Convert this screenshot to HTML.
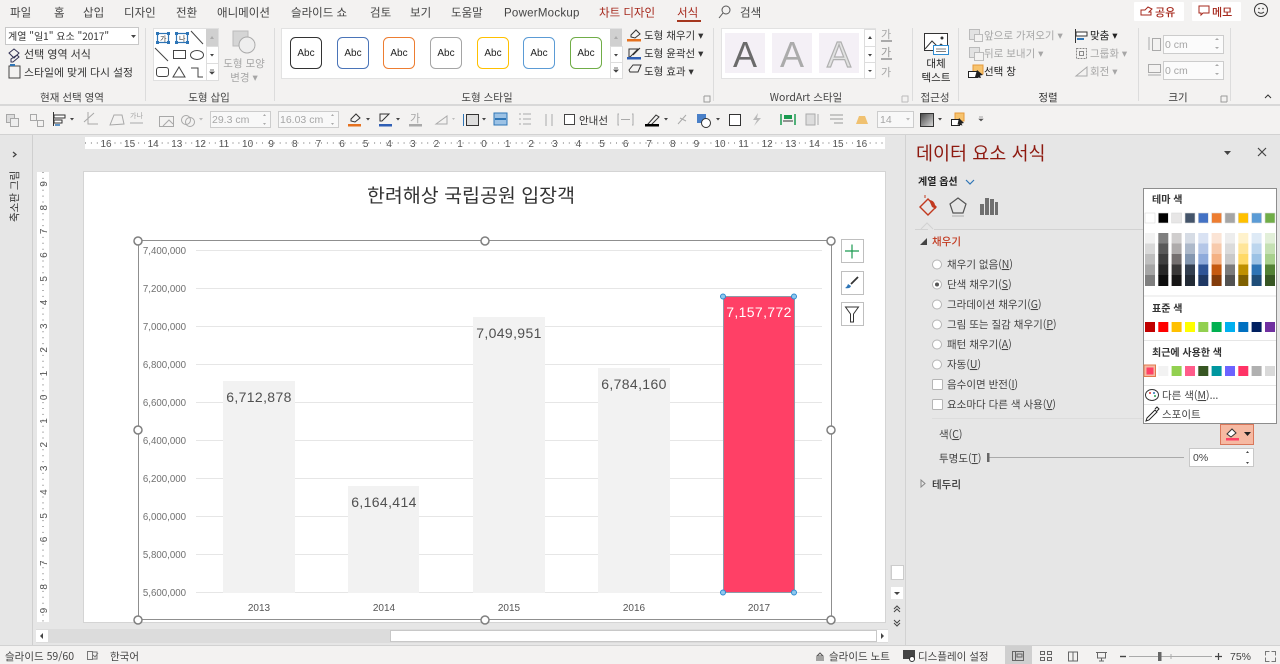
<!DOCTYPE html>
<html lang="ko"><head><meta charset="utf-8"><title>PowerPoint</title>
<style>
html,body{margin:0;padding:0;width:1280px;height:664px;overflow:hidden;background:#e6e6e6}
svg{display:block}
text{font-family:"Liberation Sans","Noto Sans CJK KR",sans-serif;font-size:11px;fill:#444}
.k{font-family:"Noto Sans CJK KR","Liberation Sans",sans-serif}
.t{font-size:11.5px;fill:#444}
.d{fill:#a6a6a6}
.r{font-size:10px;fill:#555}
.ax{font-size:9.7px;fill:#707070}
.v{font-size:14px;fill:#505050;text-anchor:middle;letter-spacing:.35px}
.g{stroke:#e6e6e6;stroke-width:1}
.h{fill:#fff;stroke:#7f7f7f;stroke-width:1.5}
.i{fill:none;stroke:#555;stroke-width:1}
.o{fill:none;stroke:#aaa;stroke-width:1}
.m{text-anchor:middle}
</style></head><body>
<svg xmlns="http://www.w3.org/2000/svg" width="1280" height="664" viewBox="0 0 1280 664">
<rect width="1280" height="664" fill="#e6e6e6"/>
<rect width="1280" height="135" fill="#f3f2f1"/>
<rect y="104" width="1280" height="2" fill="#d8d8d8"/>
<rect y="134" width="1280" height="1" fill="#d2d2d2"/>

<!-- tabs -->
<g class="k">
<text class="t" x="10" y="16.500">파일</text><text class="t" x="54" y="16.500">홈</text><text class="t" x="83" y="16.500">삽입</text><text class="t" x="124" y="16.500">디자인</text><text class="t" x="176" y="16.500">전환</text><text class="t" x="217" y="16.500">애니메이션</text><text class="t" x="291" y="16.500">슬라이드 쇼</text><text class="t" x="370" y="16.500">검토</text><text class="t" x="410" y="16.500">보기</text><text class="t" x="451" y="16.500">도움말</text>
<text class="t" x="504" y="16.500" style="letter-spacing:.25px">PowerMockup</text>
<text class="t" x="599" y="16.500" style="fill:#a5271b">차트 디자인</text>
<text class="t" x="677" y="16.500" style="fill:#a5271b">서식</text>
<text class="t" x="740" y="16.500">검색</text>
</g>
<rect x="677" y="20" width="24" height="2" fill="#a5371f"/>
<circle cx="726" cy="10" r="4" class="i"/><path d="M723 13l-4 5" class="i"/>
<rect x="1134" y="2" width="50" height="19" rx="1" fill="#fff"/>
<rect x="1192" y="2" width="49" height="19" rx="1" fill="#fff"/>
<path d="M1141 15v-5h4l3-3 4 2-3 3h2v3z" fill="none" stroke="#a5271b"/>
<path d="M1199 6h10v7h-6l-2 2v-2h-2z" fill="none" stroke="#a5271b"/>
<text class="k" x="1155" y="16" style="fill:#a5271b;font-weight:500;font-size:11px">공유</text>
<text class="k" x="1212" y="16" style="fill:#a5271b;font-weight:500;font-size:11px">메모</text>
<circle cx="1261" cy="10" r="6.5" class="i" style="stroke:#333"/><circle cx="1259" cy="8.5" r=".8" fill="#333"/><circle cx="1263" cy="8.5" r=".8" fill="#333"/><path d="M1258 12q3 2.500 6 0" class="i" style="stroke:#333"/>

<!-- group separators -->
<g fill="#dcdcdc"><rect x="145" y="28" width="1" height="73"/><rect x="274" y="28" width="1" height="73"/><rect x="713" y="28" width="1" height="73"/><rect x="912" y="28" width="1" height="73"/><rect x="958" y="28" width="1" height="73"/><rect x="1138" y="28" width="1" height="73"/><rect x="1230" y="28" width="1" height="73"/></g>

<!-- current selection -->
<rect x="5.500" y="27.500" width="133" height="17" fill="#fff" stroke="#c8c8c8"/>
<text class="k" x="8" y="40" style="font-size:10px;fill:#333">계열 "일1" 요소 "2017"</text>
<path d="M131 35h5l-2.500 3z" fill="#444"/>
<path d="M9 53l5-4 5 4-5 5zM11 59l6-4 2 2-6 5h-2z" fill="none" stroke="#335"/>
<rect x="9" y="66" width="11" height="12" fill="none" stroke="#444"/><path d="M10 65h5" stroke="#2e75b6" stroke-width="2"/>
<text class="k" x="24" y="58" style="font-size:11px;fill:#333">선택 영역 서식</text>
<text class="k" x="24" y="76" style="font-size:10.500px;fill:#333" textLength="109" lengthAdjust="spacingAndGlyphs">스타일에 맞게 다시 설정</text>
<text class="k m" x="72" y="101" style="font-size:10.500px">현재 선택 영역</text>

<!-- shape gallery -->
<rect x="153.500" y="28.500" width="65" height="52" fill="#fff" stroke="#e0e0e0"/>
<rect x="206" y="29" width="12" height="17" fill="#d0d0d0"/><rect x="206.500" y="46.500" width="12" height="17" fill="#fff" stroke="#ddd"/><rect x="206.500" y="63.500" width="12" height="17" fill="#fff" stroke="#ddd"/>
<path d="M210 39l2-3 2 3z" fill="#aaa"/><path d="M210 54h4l-2 2.500z" fill="#444"/><path d="M210 70h4M210 72h4l-2 2z" stroke="#444" fill="#444" stroke-width=".8"/>
<rect x="157.500" y="33.500" width="11" height="9" fill="none" stroke="#2e75b6" stroke-width="1.200"/><rect x="176.500" y="33.500" width="11" height="9" fill="none" stroke="#2e75b6" stroke-width="1.200"/>
<g fill="#2e75b6"><rect x="156" y="32" width="3" height="3"/><rect x="167" y="32" width="3" height="3"/><rect x="156" y="41" width="3" height="3"/><rect x="167" y="41" width="3" height="3"/><rect x="175" y="32" width="3" height="3"/><rect x="186" y="32" width="3" height="3"/><rect x="175" y="41" width="3" height="3"/><rect x="186" y="41" width="3" height="3"/></g>
<text class="k" x="160" y="41" style="font-size:7px;fill:#333">가</text><text class="k" x="179" y="41" style="font-size:7px;fill:#333">나</text>
<g fill="none" stroke="#444"><path d="M191 31l12 13M155 48l13 13"/><rect x="173.500" y="50.500" width="12" height="8"/><ellipse cx="197" cy="55" rx="6.500" ry="4.500"/><rect x="156.500" y="67.500" width="12" height="9" rx="2.500"/><path d="M173 77l6-10 6 10zM191 68h7v9h5"/></g>
<rect x="233" y="31" width="15" height="15" fill="#d5d5d5" stroke="#bbb"/><circle cx="247" cy="45" r="8" fill="#eee" stroke="#aaa"/>
<text class="k m d" x="244" y="67" style="font-size:10.500px">도형 모양</text><text class="k m d" x="244" y="81" style="font-size:10.500px">변경 ▾</text>
<text class="k m" x="209" y="101" style="font-size:10.500px">도형 삽입</text>

<!-- shape styles -->
<rect x="281.500" y="28.500" width="340" height="50" fill="#fff" stroke="#e2e2e2"/>
<g fill="#fff" stroke-width="1"><rect x="290.500" y="37.500" width="31" height="31" rx="5" stroke="#333"/><rect x="337.500" y="37.500" width="31" height="31" rx="5" stroke="#4a74b8"/><rect x="383.500" y="37.500" width="31" height="31" rx="5" stroke="#ed7d31"/><rect x="430.500" y="37.500" width="31" height="31" rx="5" stroke="#a5a5a5"/><rect x="477.500" y="37.500" width="31" height="31" rx="5" stroke="#ffc000"/><rect x="523.500" y="37.500" width="31" height="31" rx="5" stroke="#5b9bd5"/><rect x="570.500" y="37.500" width="31" height="31" rx="5" stroke="#70ad47"/></g>
<g style="font-size:10px"><text class="m" x="306" y="56" style="fill:#222;font-size:10px">Abc</text><text class="m" x="353" y="56" style="fill:#222;font-size:10px">Abc</text><text class="m" x="399" y="56" style="fill:#222;font-size:10px">Abc</text><text class="m" x="446" y="56" style="fill:#222;font-size:10px">Abc</text><text class="m" x="493" y="56" style="fill:#222;font-size:10px">Abc</text><text class="m" x="539" y="56" style="fill:#222;font-size:10px">Abc</text><text class="m" x="586" y="56" style="fill:#222;font-size:10px">Abc</text></g>
<rect x="610" y="29" width="12" height="17" fill="#d0d0d0"/><rect x="610.500" y="46.500" width="12" height="16" fill="#fff" stroke="#ddd"/><rect x="610.500" y="62.500" width="12" height="16" fill="#fff" stroke="#ddd"/>
<path d="M614 39l2-3 2 3z" fill="#aaa"/><path d="M614 54h4l-2 2.500z" fill="#444"/><path d="M614 68h4M614 70h4l-2 2z" stroke="#444" fill="#444" stroke-width=".8"/>
<path d="M631 35l5-5 4 4-5 4-4-1z" fill="none" stroke="#333"/><rect x="627" y="39" width="14" height="2.500" fill="#e5711f"/>
<path d="M629 49h9l-1 1-7 7h-1zM640 48l-7 7" fill="none" stroke="#333"/><rect x="627" y="57" width="14" height="2.500" fill="#2f5fb5"/>
<path d="M629 70l4-5h8l-3 7h-8z" fill="none" stroke="#333"/>
<g class="k" style="font-size:10.500px"><text x="644" y="39" style="font-size:10.500px;fill:#333">도형 채우기 ▾</text><text x="644" y="57" style="font-size:10.500px;fill:#333">도형 윤곽선 ▾</text><text x="644" y="75" style="font-size:10.500px;fill:#333">도형 효과 ▾</text></g>
<text class="k m" x="487" y="101" style="font-size:10.500px">도형 스타일</text>
<path d="M704 96h6v6M704 96v6h6" class="o" style="stroke:#999"/>

<!-- wordart -->
<rect x="721.500" y="28.500" width="154" height="50" fill="#fff" stroke="#e2e2e2"/>
<rect x="725" y="33" width="40" height="40" fill="#f4f0f6"/><rect x="772" y="33" width="40" height="40" fill="#f4f0f6"/><rect x="819" y="33" width="40" height="40" fill="#f4f0f6"/>
<text class="m" x="745" y="67" style="font-size:36px;fill:#6b6b6b">A</text><text class="m" x="792" y="67" style="font-size:36px;fill:#ababab">A</text><text class="m" x="839" y="67" style="font-size:36px;fill:#e2e2e2;stroke:#b0b0b0;stroke-width:1.200">A</text>
<rect x="864.500" y="29.500" width="11" height="17" fill="#fff" stroke="#ddd"/><rect x="864.500" y="46.500" width="11" height="16" fill="#fff" stroke="#ddd"/><rect x="864.500" y="62.500" width="11" height="16" fill="#fff" stroke="#ddd"/>
<path d="M868 39l2-3 2 3zM868 54h4l-2 2.500zM868 70h4l-2 2z" fill="#444"/>
<text class="k d" x="881" y="38" style="font-size:11px">가</text><rect x="881" y="40" width="11" height="2" fill="#aaa"/><text class="k d" x="881" y="56" style="font-size:11px;fill:#999">가</text><rect x="881" y="58" width="11" height="2" fill="#aaa"/><text class="k d" x="881" y="76" style="font-size:11px">가</text>
<text class="k m" x="806" y="101" style="font-size:10.500px">WordArt 스타일</text>
<path d="M902 96h6v6M902 96v6h6" class="o" style="stroke:#bbb"/>

<!-- alt text -->
<rect x="924.500" y="33.500" width="23" height="17" fill="#fff" stroke="#333"/><path d="M925 49l7-8 6 6 3-3 6 5" fill="none" stroke="#333"/><circle cx="942" cy="38" r="1.500" fill="#333"/>
<rect x="933.500" y="45.500" width="15" height="9" fill="#fff" stroke="#2e8bd0"/><path d="M936 49h10M936 51.500h10" stroke="#555" stroke-width=".8"/>
<text class="k m" x="936" y="67" style="font-size:10.500px;fill:#222">대체</text><text class="k m" x="936" y="81" style="font-size:10.500px;fill:#222">텍스트</text>
<text class="k m" x="935" y="101" style="font-size:10.500px">접근성</text>

<!-- arrange -->
<g fill="#e2e2e2" stroke="#bbb"><rect x="969.500" y="29.500" width="10" height="10"/><rect x="974.500" y="34.500" width="8" height="7" fill="#f3f2f1"/><rect x="969.500" y="47.500" width="10" height="10"/><rect x="974.500" y="52.500" width="9" height="8" fill="#f3f2f1"/></g>
<rect x="973" y="65" width="10" height="9" fill="#f7c36d" stroke="#e59a3a"/><rect x="968.500" y="71.500" width="9" height="6" fill="#fff" stroke="#222"/><path d="M977 70l6 5-3 .5 1 2.500-6-1z" fill="#222"/>
<text class="k d" x="984" y="39" style="font-size:10.500px">앞으로 가져오기 ▾</text><text class="k d" x="984" y="57" style="font-size:10.500px">뒤로 보내기 ▾</text><text class="k" x="984" y="75" style="font-size:10.500px;fill:#222">선택 창</text>
<path d="M1075.500 29v14" stroke="#333"/><rect x="1076" y="32" width="11" height="4" fill="#fff" stroke="#333"/><path d="M1077 39h7" stroke="#2e75b6" stroke-width="2"/>
<rect x="1076.500" y="48.500" width="10" height="10" fill="none" stroke="#888" stroke-dasharray="2 1"/><rect x="1079.500" y="51.500" width="4" height="4" fill="none" stroke="#888"/>
<path d="M1076 76l11-9v9z" fill="none" stroke="#aaa"/>
<text class="k" x="1090" y="39" style="font-size:10.500px;fill:#222">맞춤 ▾</text><text class="k d" x="1090" y="57" style="font-size:10.500px">그룹화 ▾</text><text class="k d" x="1090" y="75" style="font-size:10.500px">회전 ▾</text>
<text class="k m" x="1048" y="101" style="font-size:10.500px;fill:#333">정렬</text>

<!-- size -->
<rect x="1163.500" y="35.500" width="60" height="18" fill="#fbfbfb" stroke="#ccc"/><rect x="1163.500" y="61.500" width="60" height="18" fill="#fbfbfb" stroke="#ccc"/>
<text class="d" x="1165" y="48" style="font-size:10.500px">0 cm</text><text class="d" x="1165" y="74" style="font-size:10.500px">0 cm</text>
<path d="M1215 40l2-2 2 2zM1215 47h4l-2 2zM1215 66l2-2 2 2zM1215 73h4l-2 2z" fill="#aaa"/>
<rect x="1152.500" y="38.500" width="8" height="12" fill="none" stroke="#aaa"/><path d="M1149 37v13" stroke="#aaa"/>
<rect x="1148.500" y="64.500" width="12" height="8" fill="none" stroke="#aaa"/><path d="M1148 75h13" stroke="#aaa"/>
<text class="k m" x="1178" y="101" style="font-size:10.500px;fill:#333">크기</text>
<path d="M1221 96h6v6M1221 96v6h6" class="o" style="stroke:#999"/>
<path d="M1265 98l3-3 3 3" fill="none" stroke="#333"/>

<!-- toolbar -->
<g fill="none" stroke="#a8a8a8"><rect x="6.500" y="114.500" width="8" height="8" fill="#ddd"/><rect x="10.500" y="118.500" width="8" height="8" fill="#eee"/><rect x="30.500" y="114.500" width="6" height="6"/><rect x="37.500" y="120.500" width="6" height="6"/><path d="M84 122l10-9M88 112v12h10M110 125l4-10h8l2 9z"/><rect x="159.500" y="116.500" width="14" height="10"/><path d="M163 126l6-6 4 4"/><circle cx="186" cy="120" r="4.500"/><circle cx="190" cy="122" r="4.500"/><path d="M199 118h4l-2 2.500z" fill="#bbb" stroke="none"/></g>
<path d="M53.500 112v14" stroke="#333"/><rect x="54" y="115" width="11" height="3" fill="#fff" stroke="#333"/><rect x="54" y="120" width="8" height="3" fill="#fff" stroke="#333"/><path d="M55 125h5" stroke="#2e75b6" stroke-width="1.500"/><path d="M70 118h4l-2 2.500z" fill="#444"/>
<text class="k d" x="130" y="118" style="font-size:7px">가나</text><path d="M130 123h13" stroke="#aaa"/>
<rect x="210.500" y="111.500" width="60" height="16" fill="#f8f8f8" stroke="#ccc"/><rect x="278.500" y="111.500" width="60" height="16" fill="#f8f8f8" stroke="#ccc"/>
<text class="d" x="212" y="123" style="font-size:10.500px">29.3 cm</text><text class="d" x="280" y="123" style="font-size:10.500px">16.03 cm</text>
<path d="M263 116l1.500-2 1.500 2zM263 123h3l-1.500 2zM331 116l1.500-2 1.500 2zM331 123h3l-1.500 2z" fill="#aaa"/>
<path d="M351 119l5-5 4 4-5 4-4-1z" fill="none" stroke="#333"/><rect x="348" y="124" width="13" height="2.500" fill="#e5711f"/><path d="M366 118h4l-2 2.500z" fill="#444"/>
<path d="M380 114h9l-7 7h-2v-7z" fill="none" stroke="#333"/><rect x="379" y="124" width="13" height="2.500" fill="#2f5fb5"/><path d="M396 118h4l-2 2.500z" fill="#444"/>
<text class="k d" x="410" y="122" style="font-size:11px">가</text><rect x="409" y="124" width="13" height="2.500" fill="#aaa"/>
<path d="M436 124l11-8v8z" fill="none" stroke="#aaa"/><path d="M452 118h3l-1.500 2z" fill="#bbb"/>
<path d="M463.500 114v12" stroke="#2e75b6"/><rect x="466.500" y="114.500" width="12" height="11" fill="#ddd" stroke="#333"/><path d="M482 118h4l-2 2.500z" fill="#444"/>
<rect x="494" y="113" width="13" height="12" fill="#9cc2e5" stroke="#2e75b6"/><path d="M495 119h11" stroke="#2e75b6" stroke-width="2"/>
<path d="M519 114h2M519 119h2M519 124h2M523 114h8M523 119h8M523 124h8M546 114v12M552 114v12" stroke="#aaa"/>
<rect x="564.500" y="114.500" width="10" height="10" fill="#fff" stroke="#444"/><text class="k" x="579" y="124" style="font-size:10.500px;fill:#333">안내선</text>
<path d="M619 114h-1v11h1M632 114h1v11h-1M621 119.500h9" fill="none" stroke="#aaa"/>
<path d="M648 124l8-9 3 2-8 8z" fill="none" stroke="#333"/><rect x="645" y="124" width="14" height="2.500" fill="#000"/><path d="M664 118h4l-2 2.500z" fill="#444"/>
<path d="M678 124l8-9M680 118l6 3" fill="none" stroke="#aaa"/>
<rect x="697" y="114" width="9" height="9" fill="#4a80c8"/><circle cx="706" cy="123" r="4.500" fill="#fff" stroke="#333"/><path d="M716 118h4l-2 2.500z" fill="#444"/>
<rect x="729.500" y="114.500" width="11" height="11" fill="#fff" stroke="#333"/>
<path d="M758 113l-5 7h4l-3 6 7-8h-4z" fill="#bbb"/>
<path d="M781 114v11M795 114v11" stroke="#1a9a50" stroke-width="1.500"/><rect x="784" y="115" width="8" height="4" fill="#1a9a50"/><path d="M783 121h10" stroke="#333"/>
<rect x="806" y="114" width="9" height="11" fill="#ddd" stroke="#aaa"/><path d="M818 114v11" stroke="#aaa"/>
<path d="M830 115h13M830 119h13M834 123h9" stroke="#999"/>
<path d="M856 124l3-8h6l3 8z" fill="#f0c170"/>
<rect x="877.500" y="111.500" width="36" height="16" fill="#f8f8f8" stroke="#ccc"/><text class="d" x="880" y="123" style="font-size:10.500px">14</text><path d="M906 118h4l-2 2.500z" fill="#bbb"/>
<defs><linearGradient id="gr" x1="0" y1="0" x2="1" y2="1"><stop offset="0" stop-color="#444"/><stop offset="1" stop-color="#ddd"/></linearGradient></defs>
<rect x="920.500" y="113.500" width="13" height="13" fill="url(#gr)" stroke="#333"/><path d="M938 118h4l-2 2.500z" fill="#444"/>
<rect x="955" y="113" width="9" height="8" fill="#f7c36d" stroke="#e59a3a"/><rect x="951.500" y="119.500" width="8" height="6" fill="#fff" stroke="#222"/><path d="M959 118l5 5-2.500 .5 1 2-5-1z" fill="#222"/>
<path d="M979 117h4M979 119h4l-2 2z" fill="#555" stroke="#555" stroke-width=".6"/>

<!-- left thumbnail strip -->
<rect x="32" y="135" width="1" height="511" fill="#cfcfcf"/>
<path d="M13 152l3 2.500-3 2.500" fill="none" stroke="#444" stroke-width="1.300"/>
<text class="k" transform="translate(18,222) rotate(-90)" style="font-size:10.500px;fill:#333">축소판 그림</text>

<!-- rulers -->
<rect x="85" y="137" width="800" height="12" fill="#fff"/>
<rect x="37" y="172" width="12" height="450" fill="#fff"/>
<path d="M85 143H885" stroke="#666" stroke-width="1" stroke-dasharray="1 4.900"/>
<path d="M43 172V622" stroke="#666" stroke-width="1" stroke-dasharray="1 4.900"/>
<g>
<text class="r m" x="106" y="147">16</text><text class="r m" x="129.600" y="147">15</text><text class="r m" x="153.200" y="147">14</text><text class="r m" x="176.800" y="147">13</text><text class="r m" x="200.400" y="147">12</text><text class="r m" x="224" y="147">11</text><text class="r m" x="247.600" y="147">10</text><text class="r m" x="271.200" y="147">9</text><text class="r m" x="294.800" y="147">8</text><text class="r m" x="318.400" y="147">7</text><text class="r m" x="342" y="147">6</text><text class="r m" x="365.600" y="147">5</text><text class="r m" x="389.200" y="147">4</text><text class="r m" x="412.800" y="147">3</text><text class="r m" x="436.400" y="147">2</text><text class="r m" x="460" y="147">1</text><text class="r m" x="484" y="147">0</text><text class="r m" x="507.600" y="147">1</text><text class="r m" x="531.200" y="147">2</text><text class="r m" x="554.800" y="147">3</text><text class="r m" x="578.400" y="147">4</text><text class="r m" x="602" y="147">5</text><text class="r m" x="625.600" y="147">6</text><text class="r m" x="649.200" y="147">7</text><text class="r m" x="672.800" y="147">8</text><text class="r m" x="696.400" y="147">9</text><text class="r m" x="720" y="147">10</text><text class="r m" x="743.600" y="147">11</text><text class="r m" x="767.200" y="147">12</text><text class="r m" x="790.800" y="147">13</text><text class="r m" x="814.400" y="147">14</text><text class="r m" x="838" y="147">15</text><text class="r m" x="861.600" y="147">16</text>
<text class="r m" transform="translate(47,184) rotate(-90)">9</text><text class="r m" transform="translate(47,207.700) rotate(-90)">8</text><text class="r m" transform="translate(47,231.400) rotate(-90)">7</text><text class="r m" transform="translate(47,255.100) rotate(-90)">6</text><text class="r m" transform="translate(47,278.800) rotate(-90)">5</text><text class="r m" transform="translate(47,302.500) rotate(-90)">4</text><text class="r m" transform="translate(47,326.200) rotate(-90)">3</text><text class="r m" transform="translate(47,349.900) rotate(-90)">2</text><text class="r m" transform="translate(47,373.600) rotate(-90)">1</text><text class="r m" transform="translate(47,397.300) rotate(-90)">0</text><text class="r m" transform="translate(47,421) rotate(-90)">1</text><text class="r m" transform="translate(47,444.700) rotate(-90)">2</text><text class="r m" transform="translate(47,468.400) rotate(-90)">3</text><text class="r m" transform="translate(47,492.100) rotate(-90)">4</text><text class="r m" transform="translate(47,515.800) rotate(-90)">5</text><text class="r m" transform="translate(47,539.500) rotate(-90)">6</text><text class="r m" transform="translate(47,563.200) rotate(-90)">7</text><text class="r m" transform="translate(47,586.900) rotate(-90)">8</text><text class="r m" transform="translate(47,610.600) rotate(-90)">9</text>
</g>

<!-- slide -->
<rect x="83.500" y="171.500" width="802" height="451" fill="#fff" stroke="#d4d4d4"/>
<text class="k m" x="471" y="202" style="font-size:19px;fill:#333" textLength="208" lengthAdjust="spacingAndGlyphs">한려해상 국립공원 입장객</text>

<g class="g">
<path d="M196 250.500H822M196 288.500H822M196 326.500H822M196 364.500H822M196 402.500H822M196 440.500H822M196 478.500H822M196 516.500H822M196 554.500H822M196 592.500H822"/>
</g>
<g fill="#f2f2f2"><rect x="223" y="381" width="72" height="212"/><rect x="348" y="486" width="71" height="107"/><rect x="473" y="317" width="72" height="276"/><rect x="598" y="368" width="72" height="225"/></g>
<rect x="723.500" y="296.500" width="71" height="296" fill="#ff4066" stroke="#8d9aa8"/>

<g>
<text class="ax" x="186" y="254" text-anchor="end">7,400,000</text><text class="ax" x="186" y="292" text-anchor="end">7,200,000</text><text class="ax" x="186" y="330" text-anchor="end">7,000,000</text><text class="ax" x="186" y="368" text-anchor="end">6,800,000</text><text class="ax" x="186" y="406" text-anchor="end">6,600,000</text><text class="ax" x="186" y="444" text-anchor="end">6,400,000</text><text class="ax" x="186" y="482" text-anchor="end">6,200,000</text><text class="ax" x="186" y="520" text-anchor="end">6,000,000</text><text class="ax" x="186" y="558" text-anchor="end">5,800,000</text><text class="ax" x="186" y="596" text-anchor="end">5,600,000</text>
</g>
<text class="ax m" x="259" y="611" style="fill:#555;font-size:10px">2013</text><text class="ax m" x="384" y="611" style="fill:#555;font-size:10px">2014</text><text class="ax m" x="509" y="611" style="fill:#555;font-size:10px">2015</text><text class="ax m" x="634" y="611" style="fill:#555;font-size:10px">2016</text><text class="ax m" x="759" y="611" style="fill:#555;font-size:10px">2017</text>
<text class="v" x="259" y="402">6,712,878</text><text class="v" x="384" y="507">6,164,414</text><text class="v" x="509" y="338">7,049,951</text><text class="v" x="634" y="389">6,784,160</text><text class="v" x="759" y="317" style="fill:#fff">7,157,772</text>

<rect x="138.500" y="240.500" width="693" height="379" fill="none" stroke="#8f8f8f" stroke-width="1"/>
<circle class="h" cx="138" cy="241" r="4"/><circle class="h" cx="485" cy="241" r="4"/><circle class="h" cx="831" cy="241" r="4"/><circle class="h" cx="138" cy="430" r="4"/><circle class="h" cx="831" cy="430" r="4"/><circle class="h" cx="138" cy="620" r="4"/><circle class="h" cx="485" cy="620" r="4"/><circle class="h" cx="831" cy="620" r="4"/>
<g fill="#8ec7ee" stroke="#2e8bd0"><circle cx="723" cy="296.500" r="2.500"/><circle cx="794" cy="296.500" r="2.500"/><circle cx="723" cy="592.500" r="2.500"/><circle cx="794" cy="592.500" r="2.500"/></g>

<!-- chart buttons -->
<g fill="#fff" stroke="#bfbfbf"><rect x="841.500" y="239.500" width="22" height="23"/><rect x="841.500" y="271.500" width="22" height="23"/><rect x="841.500" y="302.500" width="22" height="23"/></g>
<path d="M852 244.500v14M845 251h14" stroke="#1a9a50" stroke-width="1.200"/>
<path d="M858 277l-7 7" stroke="#333" stroke-width="1.800"/><path d="M845 288q2-1 3-4l3 2q-1 3-6 2z" fill="#2e75b6"/>
<path d="M845.500 307h13l-5 7v8h-3v-8z" fill="#fff" stroke="#333"/>

<!-- canvas scrollbars -->
<rect x="36" y="629" width="852" height="14" fill="#dcdcdc"/>
<rect x="36" y="630" width="12" height="12" fill="#fff"/><path d="M43 633l-3 3 3 3z" fill="#444"/>
<rect x="390.500" y="630.500" width="486" height="11" fill="#fff" stroke="#c8c8c8"/>
<rect x="877" y="630" width="11" height="12" fill="#fff"/><path d="M881 633l3 3-3 3z" fill="#444"/>
<rect x="890" y="565" width="14" height="15" fill="#dcdcdc"/><rect x="891.500" y="565.500" width="12" height="14" fill="#fff" stroke="#ccc"/>
<rect x="891" y="587" width="12" height="12" fill="#fff"/><path d="M894 592h6l-3 3z" fill="#444"/>
<path d="M894 609l3-3 3 3M894 612l3-3 3 3M894 620l3 3 3-3M894 623l3 3 3-3" fill="none" stroke="#444"/>
<rect x="905" y="135" width="1" height="511" fill="#d2d2d2"/>

<!-- format pane -->
<text class="k" x="916" y="160" style="font-size:18.500px;fill:#8e1a10">데이터 요소 서식</text>
<path d="M1224 151h7l-3.500 4z" fill="#444"/><path d="M1258 148l8 8M1266 148l-8 8" stroke="#444" stroke-width="1.200"/>
<text class="k" x="918" y="185" style="font-size:10px;fill:#222;font-weight:700">계열 옵션</text><path d="M966 180l4 4 4-4" fill="none" stroke="#2e75b6" stroke-width="1.200"/>
<path d="M920 207l8-8 8 8-8 8z" fill="none" stroke="#c2391f" stroke-width="1.400"/><path d="M925 198v-3" stroke="#c2391f"/><path d="M929 200q5 0 6 5l1 4-4-2z" fill="#c2391f"/>
<path d="M958 198l8 6-3 9h-10l-3-9z" fill="none" stroke="#555" stroke-width="1.200"/><path d="M952 216h12" stroke="#aaa"/>
<g fill="#6f6f6f"><rect x="980" y="204" width="4" height="11"/><rect x="985" y="198" width="4" height="17"/><rect x="990" y="199" width="4" height="16"/><rect x="995" y="202" width="3" height="13"/></g>
<path d="M915 229.500h13l-1 0M934 229.500H1143" stroke="#d2d2d2"/><path d="M921 229l6-6 6 6" fill="none" stroke="#d2d2d2"/>
<path d="M920 245h7v-7z" fill="#444"/>
<text class="k" x="932" y="245" style="font-size:10.500px;fill:#c2391f;font-weight:500">채우기</text>
<g fill="#fff" stroke="#b5b5b5"><circle cx="937" cy="264.500" r="4.500"/><circle cx="937" cy="284.500" r="4.500"/><circle cx="937" cy="304.500" r="4.500"/><circle cx="937" cy="324.500" r="4.500"/><circle cx="937" cy="344.500" r="4.500"/><circle cx="937" cy="364.500" r="4.500"/></g>
<circle cx="937" cy="284.500" r="2" fill="#555"/>
<g><text class="k" x="947" y="268" style="font-size:10.500px">채우기 없음(<tspan text-decoration="underline">N</tspan>)</text><text class="k" x="947" y="288" style="font-size:10.500px">단색 채우기(<tspan text-decoration="underline">S</tspan>)</text><text class="k" x="947" y="308" style="font-size:10.500px">그라데이션 채우기(<tspan text-decoration="underline">G</tspan>)</text><text class="k" x="947" y="328" style="font-size:10.500px">그림 또는 질감 채우기(<tspan text-decoration="underline">P</tspan>)</text><text class="k" x="947" y="348" style="font-size:10.500px">패턴 채우기(<tspan text-decoration="underline">A</tspan>)</text><text class="k" x="947" y="368" style="font-size:10.500px">자동(<tspan text-decoration="underline">U</tspan>)</text><text class="k" x="947" y="388" style="font-size:10.500px">음수이면 반전(<tspan text-decoration="underline">I</tspan>)</text><text class="k" x="947" y="408" style="font-size:10.500px">요소마다 다른 색 사용(<tspan text-decoration="underline">V</tspan>)</text>
<text class="k" x="939" y="438" style="font-size:10.500px">색(<tspan text-decoration="underline">C</tspan>)</text><text class="k" x="939" y="462" style="font-size:10.500px">투명도(<tspan text-decoration="underline">T</tspan>)</text></g>
<rect x="932.500" y="379.500" width="10" height="10" rx="1" fill="#fff" stroke="#b5b5b5"/><rect x="932.500" y="399.500" width="10" height="10" rx="1" fill="#fff" stroke="#b5b5b5"/>
<path d="M932 418.500H1143" stroke="#dcdcdc"/>
<rect x="1220.500" y="424.500" width="33" height="20" fill="#f6b9a2" stroke="#d9775a"/>
<path d="M1227 434l5-5 4 4-5 4z" fill="#fff" stroke="#333"/><rect x="1226" y="438" width="13" height="2.500" fill="#ff4066"/><path d="M1244 432h7l-3.500 4z" fill="#222"/>
<path d="M988 457.500H1184" stroke="#aaa"/><rect x="987" y="453" width="2.500" height="9" fill="#666"/>
<rect x="1189.500" y="448.500" width="64" height="18" fill="#fff" stroke="#c8c8c8"/><text x="1193" y="461" style="font-size:10.500px">0%</text>
<path d="M1246 453l1.500-2 1.500 2zM1246 462h3l-1.500 2z" fill="#444"/>
<path d="M921 480l4 3.500-4 3.500z" fill="none" stroke="#888"/>
<text class="k" x="932" y="488" style="font-size:10.500px;font-weight:500;fill:#333">테두리</text>

<!-- color popup -->
<rect x="1143.500" y="188.500" width="133" height="235" fill="#fff" stroke="#8d8d8d"/>
<text class="k" x="1152" y="203" style="font-size:10px;font-weight:700;fill:#333">테마 색</text>
<g stroke="#d9d9d9" stroke-width=".6">
<rect x="1145" y="213" width="10" height="10" fill="#fff"/><rect x="1158.300" y="213" width="10" height="10" fill="#000"/><rect x="1171.600" y="213" width="10" height="10" fill="#e7e6e6"/><rect x="1185" y="213" width="10" height="10" fill="#44546a"/><rect x="1198.300" y="213" width="10" height="10" fill="#4472c4"/><rect x="1211.600" y="213" width="10" height="10" fill="#ed7d31"/><rect x="1225" y="213" width="10" height="10" fill="#a5a5a5"/><rect x="1238.300" y="213" width="10" height="10" fill="#ffc000"/><rect x="1251.600" y="213" width="10" height="10" fill="#5b9bd5"/><rect x="1265" y="213" width="10" height="10" fill="#70ad47"/>
</g>
<g>
<g transform="translate(1145,233)"><rect width="10" height="11" fill="#f2f2f2"/><rect y="10.500" width="10" height="11" fill="#d9d9d9"/><rect y="21" width="10" height="11" fill="#bfbfbf"/><rect y="31.500" width="10" height="11" fill="#a6a6a6"/><rect y="42" width="10" height="11" fill="#7f7f7f"/></g>
<g transform="translate(1158.300,233)"><rect width="10" height="11" fill="#7f7f7f"/><rect y="10.500" width="10" height="11" fill="#595959"/><rect y="21" width="10" height="11" fill="#3f3f3f"/><rect y="31.500" width="10" height="11" fill="#262626"/><rect y="42" width="10" height="11" fill="#0d0d0d"/></g>
<g transform="translate(1171.600,233)"><rect width="10" height="11" fill="#d0cece"/><rect y="10.500" width="10" height="11" fill="#aeabab"/><rect y="21" width="10" height="11" fill="#757070"/><rect y="31.500" width="10" height="11" fill="#3a3838"/><rect y="42" width="10" height="11" fill="#171616"/></g>
<g transform="translate(1185,233)"><rect width="10" height="11" fill="#d6dce5"/><rect y="10.500" width="10" height="11" fill="#adb9ca"/><rect y="21" width="10" height="11" fill="#8497b0"/><rect y="31.500" width="10" height="11" fill="#333f50"/><rect y="42" width="10" height="11" fill="#222a35"/></g>
<g transform="translate(1198.300,233)"><rect width="10" height="11" fill="#d9e2f3"/><rect y="10.500" width="10" height="11" fill="#b4c6e7"/><rect y="21" width="10" height="11" fill="#8eaadb"/><rect y="31.500" width="10" height="11" fill="#2f5496"/><rect y="42" width="10" height="11" fill="#1f3864"/></g>
<g transform="translate(1211.600,233)"><rect width="10" height="11" fill="#fbe4d5"/><rect y="10.500" width="10" height="11" fill="#f7caac"/><rect y="21" width="10" height="11" fill="#f4b183"/><rect y="31.500" width="10" height="11" fill="#c55a11"/><rect y="42" width="10" height="11" fill="#833c0b"/></g>
<g transform="translate(1225,233)"><rect width="10" height="11" fill="#ededed"/><rect y="10.500" width="10" height="11" fill="#dbdbdb"/><rect y="21" width="10" height="11" fill="#c9c9c9"/><rect y="31.500" width="10" height="11" fill="#7b7b7b"/><rect y="42" width="10" height="11" fill="#525252"/></g>
<g transform="translate(1238.300,233)"><rect width="10" height="11" fill="#fff2cc"/><rect y="10.500" width="10" height="11" fill="#ffe599"/><rect y="21" width="10" height="11" fill="#ffd966"/><rect y="31.500" width="10" height="11" fill="#bf9000"/><rect y="42" width="10" height="11" fill="#7f6000"/></g>
<g transform="translate(1251.600,233)"><rect width="10" height="11" fill="#deeaf6"/><rect y="10.500" width="10" height="11" fill="#bdd6ee"/><rect y="21" width="10" height="11" fill="#9cc2e5"/><rect y="31.500" width="10" height="11" fill="#2e74b5"/><rect y="42" width="10" height="11" fill="#1f4e79"/></g>
<g transform="translate(1265,233)"><rect width="10" height="11" fill="#e2efd9"/><rect y="10.500" width="10" height="11" fill="#c5e0b3"/><rect y="21" width="10" height="11" fill="#a8d08d"/><rect y="31.500" width="10" height="11" fill="#538135"/><rect y="42" width="10" height="11" fill="#375623"/></g>
</g>
<path d="M1144 296H1276M1144 340.500H1276M1144 385.500H1276M1144 404.500H1276" stroke="#e6e6e6"/>
<text class="k" x="1152" y="312" style="font-size:10px;font-weight:700;fill:#333">표준 색</text>
<g><rect x="1145" y="322" width="10" height="10" fill="#c00000"/><rect x="1158.300" y="322" width="10" height="10" fill="#ff0000"/><rect x="1171.600" y="322" width="10" height="10" fill="#ffc000"/><rect x="1185" y="322" width="10" height="10" fill="#ffff00"/><rect x="1198.300" y="322" width="10" height="10" fill="#92d050"/><rect x="1211.600" y="322" width="10" height="10" fill="#00b050"/><rect x="1225" y="322" width="10" height="10" fill="#00b0f0"/><rect x="1238.300" y="322" width="10" height="10" fill="#0070c0"/><rect x="1251.600" y="322" width="10" height="10" fill="#002060"/><rect x="1265" y="322" width="10" height="10" fill="#7030a0"/></g>
<text class="k" x="1152" y="356" style="font-size:10px;font-weight:700;fill:#333">최근에 사용한 색</text>
<rect x="1144" y="365" width="11.500" height="11.500" fill="#f6b9a2" stroke="#e07a4d"/>
<g><rect x="1146.500" y="367.500" width="7" height="7" fill="#ff4066"/><rect x="1158.300" y="366" width="10" height="10" fill="#f2f2f2"/><rect x="1171.600" y="366" width="10" height="10" fill="#92d050"/><rect x="1185" y="366" width="10" height="10" fill="#ff5c8a"/><rect x="1198.300" y="366" width="10" height="10" fill="#375623"/><rect x="1211.600" y="366" width="10" height="10" fill="#00979f"/><rect x="1225" y="366" width="10" height="10" fill="#6c63ff"/><rect x="1238.300" y="366" width="10" height="10" fill="#ff3366"/><rect x="1251.600" y="366" width="10" height="10" fill="#b0b0b0"/><rect x="1265" y="366" width="10" height="10" fill="#d9d9d9"/></g>
<ellipse cx="1152" cy="395" rx="6.500" ry="5.500" fill="#fff" stroke="#333"/><circle cx="1150" cy="393" r="1" fill="#e03030"/><circle cx="1154" cy="393" r="1" fill="#2e75b6"/><circle cx="1155" cy="396" r="1" fill="#2aa04a"/>
<path d="M1147 418l8-8 2 2-8 8-3 1zM1155 409l2-2 2 2-2 2" fill="none" stroke="#222"/>
<text class="k" x="1162" y="399" style="font-size:10.500px">다른 색(<tspan text-decoration="underline">M</tspan>)...</text>
<text class="k" x="1162" y="418" style="font-size:10.500px">스포이트</text>

<!-- status bar -->
<rect y="645" width="1280" height="1" fill="#d2d2d2"/>
<rect y="646" width="1280" height="18" fill="#f3f2f1"/>
<text class="k" x="5" y="660" style="font-size:10.500px">슬라이드 59/60</text>
<rect x="87.500" y="651.500" width="5" height="8" class="i" style="stroke:#777"/><path d="M92 652h5v7h-4M93 655l2 2 3-4" fill="none" stroke="#777"/>
<text class="k" x="110" y="660" style="font-size:10.500px">한국어</text>
<path d="M816 658h8M816 660h8M817 656l3-3 3 3z" fill="none" stroke="#555"/>
<text class="k" x="829" y="660" style="font-size:10.500px">슬라이드 노트</text>
<rect x="903" y="650" width="12" height="9" fill="#444"/><circle cx="912" cy="659" r="2.500" fill="#fff" stroke="#333"/>
<text class="k" x="918" y="660" style="font-size:10.500px">디스플레이 설정</text>
<rect x="1005" y="646" width="27" height="18" fill="#cfcfcf"/>
<rect x="1012.500" y="651.500" width="11" height="9" class="i" style="stroke:#666"/><path d="M1015.500 651v10M1017 654h5v3h-5z" fill="none" stroke="#666"/>
<g class="i" style="stroke:#666"><rect x="1040.500" y="651.500" width="4" height="3"/><rect x="1047.500" y="651.500" width="4" height="3"/><rect x="1040.500" y="657.500" width="4" height="3"/><rect x="1047.500" y="657.500" width="4" height="3"/><path d="M1070 652h-1.500v9h4.500v-9zM1073 652h4.500v9h-4.500zM1096 652.500h11M1097.500 653v5h8v-5M1101.500 658v3M1099 661h5"/></g>
<path d="M1120 656.500h6" stroke="#444" stroke-width="1.400"/>
<path d="M1129 656.500h83M1171 654v5" stroke="#aaa"/><rect x="1158" y="652" width="3.500" height="9" fill="#666"/>
<path d="M1215 656.500h7M1218.500 653v7" stroke="#444" stroke-width="1.200"/>
<text x="1230" y="660" style="font-size:10.500px">75%</text>
<rect x="1265.500" y="651.500" width="10" height="10" class="i" style="stroke:#777"/><path d="M1270.500 651v11M1265 656.500h11" stroke="#f3f2f1" stroke-width="2"/>
</svg>
</body></html>
